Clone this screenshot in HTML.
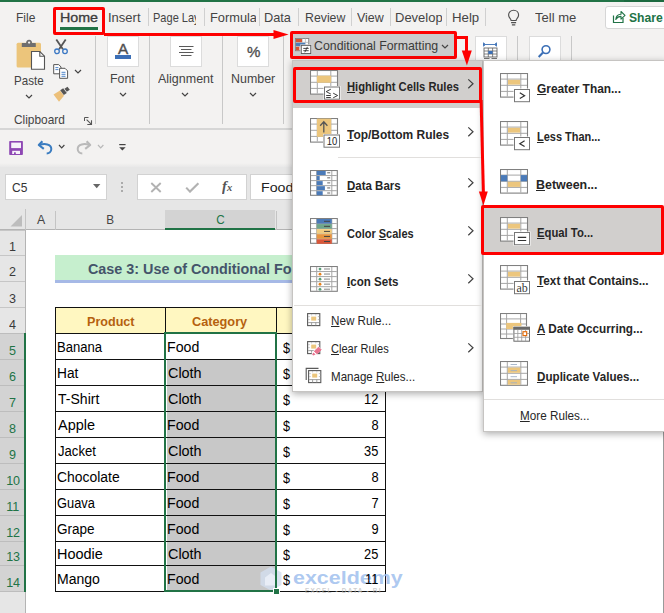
<!DOCTYPE html>
<html><head><meta charset="utf-8"><title>Excel</title>
<style>
html,body{margin:0;padding:0;}
body{width:664px;height:613px;overflow:hidden;background:#fff;position:relative;font-family:"Liberation Sans",sans-serif;}
#r{position:absolute;left:0;top:0;width:664px;height:613px;overflow:hidden;}
#r div,#r span,#r svg{position:absolute;box-sizing:border-box;}
#r .t{white-space:nowrap;line-height:1;}
#r u{text-decoration:underline;text-underline-offset:0.6px;text-decoration-thickness:1px;position:static;}
</style></head><body><div id="r">
<div style="left:0px;top:0px;width:664px;height:130px;background:#f3f2f1;"></div>
<div style="left:0px;top:0px;width:664px;height:2px;background:#217346;"></div>
<div style="left:624px;top:0px;width:40px;height:2px;background:#1c6a40;"></div>
<div style="left:0px;top:128px;width:664px;height:2px;background:#d6d6d6;"></div>
<div style="left:0px;top:130px;width:664px;height:35px;background:#f3f2f1;"></div>
<div style="left:0px;top:163px;width:664px;height:5px;background:linear-gradient(#f3f2f1,#e6e6e6);"></div>
<div style="left:0px;top:167px;width:664px;height:63px;background:#e6e6e6;"></div>
<div style="left:26px;top:230px;width:638px;height:383px;background:#fff;"></div>
<div style="left:0px;top:230px;width:26px;height:383px;background:#e6e6e6;"></div>
<span class="t" style="left:16.33px;top:12.00px;font-size:12.9px;color:#444444;transform:scaleX(0.9365);transform-origin:left top;">File</span>
<span class="t" style="left:59.56px;top:12.00px;font-size:12.9px;color:#3c3c3c;transform:scaleX(1.1057);transform-origin:left top;-webkit-text-stroke:0.32px #3c3c3c;">Home</span>
<div style="left:60px;top:27px;width:38px;height:3px;background:#217346;"></div>
<span class="t" style="left:108.33px;top:12.00px;font-size:12.9px;color:#444444;transform:scaleX(1.0100);transform-origin:left top;">Insert</span>
<div style="left:150px;top:5px;width:46px;height:25px;overflow:hidden"><span class="t" style="left:3.30px;top:7.00px;font-size:12.9px;color:#444444;transform:scaleX(0.8558);transform-origin:left top;">Page Layout</span></div>
<div style="left:206px;top:5px;width:49.8px;height:25px;overflow:hidden"><span class="t" style="left:3.50px;top:7.00px;font-size:12.9px;color:#444444;transform:scaleX(0.9938);transform-origin:left top;">Formulas</span></div>
<span class="t" style="left:264.28px;top:12.00px;font-size:12.9px;color:#444444;transform:scaleX(0.9904);transform-origin:left top;">Data</span>
<span class="t" style="left:304.62px;top:12.00px;font-size:12.9px;color:#444444;transform:scaleX(0.9545);transform-origin:left top;">Review</span>
<span class="t" style="left:357.20px;top:12.00px;font-size:12.9px;color:#444444;transform:scaleX(0.9663);transform-origin:left top;">View</span>
<div style="left:392px;top:5px;width:50.3px;height:25px;overflow:hidden"><span class="t" style="left:3.40px;top:7.00px;font-size:12.9px;color:#444444;transform:scaleX(1.0073);transform-origin:left top;">Developer</span></div>
<span class="t" style="left:451.64px;top:12.00px;font-size:12.9px;color:#444444;transform:scaleX(1.0256);transform-origin:left top;">Help</span>
<span class="t" style="left:535.44px;top:12.00px;font-size:12.9px;color:#444444;transform:scaleX(1.0111);transform-origin:left top;">Tell me</span>
<div style="left:148px;top:8px;width:1px;height:18px;background:#d0d0d0;"></div>
<div style="left:204px;top:8px;width:1px;height:18px;background:#d0d0d0;"></div>
<div style="left:259px;top:8px;width:1px;height:18px;background:#d0d0d0;"></div>
<div style="left:298px;top:8px;width:1px;height:18px;background:#d0d0d0;"></div>
<div style="left:351px;top:8px;width:1px;height:18px;background:#d0d0d0;"></div>
<div style="left:390px;top:8px;width:1px;height:18px;background:#d0d0d0;"></div>
<div style="left:446px;top:8px;width:1px;height:18px;background:#d0d0d0;"></div>
<div style="left:485px;top:8px;width:1px;height:18px;background:#d0d0d0;"></div>
<div style="left:605px;top:6px;width:70px;height:23px;background:#fff;border:1px solid #d6d6d6;border-radius:3px;"></div>
<span class="t" style="left:628.90px;top:11.00px;font-size:13.3px;color:#217346;font-weight:bold;transform:scaleX(0.9133);transform-origin:left top;">Share</span>
<svg style="left:612px;top:9px;" width="14" height="15" viewBox="0 0 14 15"><path d="M1.5 6.5v7h9.5v-4.5" fill="none" stroke="#217346" stroke-width="1.2"/><path d="M3.8 10.5c0.3-3.6 2.4-5.2 5.2-5.3v-2.7l4 3.8-4 3.8v-2.7c-2.2 0-3.8 0.7-5.2 3.1z" fill="none" stroke="#217346" stroke-width="1.1" stroke-linejoin="round"/></svg>
<svg style="left:506px;top:8px;" width="16" height="20" viewBox="0 0 16 20"><path d="M7.6 2.2c-3 0-5 2.2-5 4.8 0 1.7 0.8 2.7 1.6 3.6 0.6 0.7 0.9 1.2 0.9 1.9h5c0-0.7 0.3-1.2 0.9-1.9 0.8-0.9 1.6-1.9 1.6-3.6 0-2.6-2-4.8-5-4.8z" fill="none" stroke="#505050" stroke-width="1.15"/><path d="M5.1 14.6h5M5.9 16.9h3.4" stroke="#505050" stroke-width="1.1"/></svg>
<svg style="left:14px;top:38px;" width="34" height="34" viewBox="0 0 34 34">
<rect x="2.6" y="4.8" width="24.4" height="24.8" rx="1.5" fill="#ecc57b"/>
<path d="M7.8 8.9V5.4q0-0.5 0.5-0.5h3.8c0-1.6 0.9-3.1 3-3.1s3 1.5 3 3.1h3.2q0.5 0 0.5 0.5V8.9z" fill="#6e6e6e"/>
<circle cx="15.1" cy="4.6" r="1.15" fill="#f3f3f3"/>
<path d="M17.5 13.5h8.3l4.7 4.7v13H17.5z" fill="#fff" stroke="#555" stroke-width="1.1"/>
<path d="M25.8 13.5v4.7h4.7" fill="none" stroke="#555" stroke-width="1.1"/>
</svg>
<span class="t" style="left:14.27px;top:75.00px;font-size:12.4px;color:#444444;transform:scaleX(0.9340);transform-origin:left top;">Paste</span>
<svg style="left:24.6px;top:94.0px;" width="8" height="5" viewBox="0 0 8 5"><path d="M1 1l3.0 3 3.0-3" fill="none" stroke="#444" stroke-width="1.2"/></svg>
<svg style="left:52px;top:38px;" width="18" height="18" viewBox="0 0 18 18">
<path d="M4.3 1.5l6.6 9.7M13.7 1.5l-6.6 9.7" stroke="#555" stroke-width="1.8" fill="none"/>
<circle cx="5" cy="13.3" r="2.3" fill="none" stroke="#3b78c4" stroke-width="1.3"/>
<circle cx="13" cy="13.3" r="2.3" fill="none" stroke="#3b78c4" stroke-width="1.3"/>
</svg>
<svg style="left:52px;top:63px;" width="18" height="17" viewBox="0 0 18 17">
<path d="M1.7 1.6h5l2.3 2.3v6.9H1.7z" fill="#fff" stroke="#555" stroke-width="1"/>
<path d="M3.4 4.6h3M3.4 6.6h3" stroke="#3b78c4" stroke-width="0.9"/>
<path d="M7.6 5.3h5.4l2.6 2.6v7.4H7.6z" fill="#fff" stroke="#555" stroke-width="1"/>
<path d="M9.5 9.3h4M9.5 11.3h4M9.5 13.3h4" stroke="#3b78c4" stroke-width="0.9"/>
</svg>
<svg style="left:74.4px;top:68.9px;" width="8" height="5" viewBox="0 0 8 5"><path d="M1 1l3.0 3 3.0-3" fill="none" stroke="#444" stroke-width="1.2"/></svg>
<svg style="left:52px;top:86px;" width="19" height="17" viewBox="0 0 19 17">
<path d="M1.5 8.5l6.5-4 4 5.2-5 6z" fill="#ecc07a"/>
<path d="M8.2 4.2l3-1.9 3.6 4.7-3 1.9z" fill="#555"/>
<path d="M12.5 2.8l3-2 2.3 3-3 2z" fill="#555"/>
</svg>
<span class="t" style="left:14.01px;top:114.00px;font-size:12.4px;color:#444444;transform:scaleX(0.9592);transform-origin:left top;">Clipboard</span>
<svg style="left:83px;top:116px;" width="10" height="10" viewBox="0 0 10 10"><path d="M1.5 5V1.5H5.5" fill="none" stroke="#555" stroke-width="1"/><path d="M3.6 3.6l4.6 4.6M8.5 4.3v4.2H4.3" fill="none" stroke="#555" stroke-width="1.1"/></svg>
<div style="left:95px;top:36px;width:1px;height:88px;background:#c8c8c8;"></div>
<div style="left:107px;top:36px;width:32px;height:31px;background:#fff;border:1px solid #dcdcdc;"></div>
<span class="t" style="left:118.20px;top:42.00px;font-size:14.6px;color:#505050;transform:scaleX(1.0506);transform-origin:left top;-webkit-text-stroke:0.4px #505050;">A</span>
<div style="left:115px;top:55.3px;width:16px;height:3.5px;background:#3c6fb6;"></div>
<span class="t" style="left:110.21px;top:73.00px;font-size:12.4px;color:#444444;transform:scaleX(0.9997);transform-origin:left top;">Font</span>
<svg style="left:118.6px;top:92.0px;" width="8" height="5" viewBox="0 0 8 5"><path d="M1 1l3.0 3 3.0-3" fill="none" stroke="#444" stroke-width="1.2"/></svg>
<div style="left:149px;top:36px;width:1px;height:88px;background:#c8c8c8;"></div>
<div style="left:170px;top:36px;width:32px;height:31px;background:#fff;border:1px solid #dcdcdc;"></div>
<svg style="left:178px;top:45px;" width="17" height="12" viewBox="0 0 17 12"><path d="M1 1.5h14.5M3 4.5h10.5M1 7.5h14.5M3 10.5h10.5" stroke="#5a5a5a" stroke-width="1"/></svg>
<span class="t" style="left:158.40px;top:73.00px;font-size:12.4px;color:#444444;transform:scaleX(1.0069);transform-origin:left top;">Alignment</span>
<svg style="left:181.4px;top:91.8px;" width="8" height="5" viewBox="0 0 8 5"><path d="M1 1l3.0 3 3.0-3" fill="none" stroke="#444" stroke-width="1.2"/></svg>
<div style="left:222px;top:36px;width:1px;height:88px;background:#c8c8c8;"></div>
<div style="left:237px;top:36px;width:32px;height:31px;background:#fff;border:1px solid #dcdcdc;"></div>
<span class="t" style="left:246.87px;top:45.00px;font-size:14.8px;color:#505050;transform:scaleX(1.0218);transform-origin:left top;-webkit-text-stroke:0.35px #505050;">%</span>
<span class="t" style="left:230.70px;top:73.00px;font-size:12.4px;color:#444444;transform:scaleX(1.0031);transform-origin:left top;">Number</span>
<svg style="left:248.5px;top:91.8px;" width="8" height="5" viewBox="0 0 8 5"><path d="M1 1l3.0 3 3.0-3" fill="none" stroke="#444" stroke-width="1.2"/></svg>
<div style="left:283px;top:36px;width:1px;height:88px;background:#c8c8c8;"></div>
<div style="left:475px;top:36px;width:32px;height:31px;background:#fff;border:1px solid #dcdcdc;"></div>
<svg style="left:482px;top:42px;" width="17" height="17" viewBox="0 0 17 17">
<path d="M1.5 2.5h13M1.5 0.5v4M14.5 0.5v4M3 1.2l-1.5 1.3L3 3.8M13 1.2l1.5 1.3L13 3.8" fill="none" stroke="#3b6fb6" stroke-width="0.9"/>
<rect x="2" y="6" width="13" height="9" fill="#fff" stroke="#666" stroke-width="0.9"/>
<path d="M2 9h13M2 12h13M6.3 6v9M10.6 6v9" stroke="#666" stroke-width="0.8"/>
<rect x="6.3" y="9" width="4.3" height="3" fill="#3b6fb6"/>
<path d="M2 16.5h5.5M9.5 16.5H15" stroke="#666" stroke-width="0.9"/>
</svg>
<div style="left:517px;top:36px;width:1px;height:26px;background:#c8c8c8;"></div>
<div style="left:529px;top:36px;width:32px;height:31px;background:#fff;border:1px solid #dcdcdc;"></div>
<svg style="left:537px;top:44px;" width="15" height="15" viewBox="0 0 15 15"><circle cx="9" cy="5.6" r="3.9" fill="none" stroke="#3b6fb6" stroke-width="1.6"/><path d="M6 8.6l-4.3 4.3" stroke="#3b6fb6" stroke-width="2.1"/></svg>
<div style="left:571px;top:36px;width:1px;height:26px;background:#c8c8c8;"></div>
<div style="left:290px;top:31px;width:167px;height:27.5px;background:#cbcbcb;border:3px solid #fe0000;border-radius:2px;"></div>
<svg style="left:295px;top:38px;" width="18" height="17" viewBox="0 0 18 17">
<rect x="0.5" y="0.5" width="13.2" height="12.2" fill="#fff" stroke="#808080" stroke-width="0.9"/>
<path d="M7.2 0.5v3.8M10.4 0.5v3.8M0.5 4.4h13M0.5 8.4h13" stroke="#b0b0b0" stroke-width="0.7"/>
<rect x="1" y="1" width="6" height="3.2" fill="#d65532"/>
<rect x="1" y="4.8" width="9.4" height="3.3" fill="#4a7ebb"/>
<rect x="1" y="8.8" width="3.4" height="3.5" fill="#d65532"/>
<rect x="5.3" y="6.4" width="11.2" height="9.9" fill="#fff"/>
<rect x="6.2" y="7.3" width="9.6" height="8.3" fill="#fff" stroke="#555" stroke-width="1"/>
<path d="M8.3 10.4h5.4M8.3 12.7h5.4M12.4 8.9l-2.6 5.4" stroke="#333" stroke-width="0.9"/>
</svg>
<span class="t" style="left:314.08px;top:40.00px;font-size:12.6px;color:#3a3a3a;transform:scaleX(0.9803);transform-origin:left top;">Conditional Formatting</span>
<svg style="left:440.7px;top:44.0px;" width="8" height="5" viewBox="0 0 8 5"><path d="M1 1l3.0 3 3.0-3" fill="none" stroke="#444" stroke-width="1.2"/></svg>
<svg style="left:8px;top:139px;" width="16" height="17" viewBox="0 0 16 17">
<rect x="1.2" y="2" width="13.7" height="14" rx="0.8" fill="#8e48b4"/>
<rect x="3.2" y="3.6" width="9.8" height="5.5" fill="#f7f3fa"/>
<rect x="4.2" y="11.8" width="7.8" height="3.2" fill="#f7f3fa"/>
<rect x="6" y="13.3" width="1.8" height="1.7" fill="#8e48b4"/>
</svg>
<svg style="left:36px;top:139px;" width="18" height="16" viewBox="0 0 18 16"><path d="M6.4 2.2L2.8 6l5 3.9" fill="none" stroke="#3a7cc0" stroke-width="2.1" stroke-linejoin="round"/><path d="M3.6 6.1C8.5 4.2 15.3 5 15.3 10c0 2.8-2.2 4.4-4.6 4.5" fill="none" stroke="#3a7cc0" stroke-width="2"/></svg>
<svg style="left:57.8px;top:144.1px;" width="7.4" height="4.8" viewBox="0 0 7.4 4.8"><path d="M1 1l2.7 2.8 2.7-2.8" fill="none" stroke="#444" stroke-width="1.2"/></svg>
<svg style="left:75px;top:139px;" width="18" height="16" viewBox="0 0 18 16"><path d="M11.6 2.2L15.2 6l-5 3.9" fill="none" stroke="#b9b9b9" stroke-width="2.1" stroke-linejoin="round"/><path d="M14.4 6.1C9.5 4.2 2.7 5 2.7 10c0 2.8 2.2 4.4 4.6 4.5" fill="none" stroke="#b9b9b9" stroke-width="2"/></svg>
<svg style="left:96.7px;top:144.1px;" width="7.4" height="4.8" viewBox="0 0 7.4 4.8"><path d="M1 1l2.7 2.8 2.7-2.8" fill="none" stroke="#b8b8b8" stroke-width="1.2"/></svg>
<svg style="left:118px;top:143px;" width="9" height="9" viewBox="0 0 9 9"><path d="M1.2 1.6h6.4" stroke="#444" stroke-width="1.2"/><path d="M1.2 4.2h6.4l-3.2 3.4z" fill="#444"/></svg>
<div style="left:5px;top:174px;width:102px;height:26px;background:#fff;border:1px solid #d2d2d2;"></div>
<span class="t" style="left:11.80px;top:181.00px;font-size:13px;color:#333;transform:scaleX(0.9218);transform-origin:left top;">C5</span>
<svg style="left:93px;top:184px;" width="8" height="5" viewBox="0 0 8 5"><path d="M0 0h7.4l-3.7 4.2z" fill="#666"/></svg>
<div style="left:121px;top:182px;width:2px;height:2px;background:#ababab;"></div>
<div style="left:121px;top:186px;width:2px;height:2px;background:#ababab;"></div>
<div style="left:121px;top:190px;width:2px;height:2px;background:#ababab;"></div>
<div style="left:137px;top:174px;width:110px;height:26px;background:#fff;border:1px solid #d2d2d2;"></div>
<svg style="left:150px;top:182px;" width="12" height="11" viewBox="0 0 12 11"><path d="M1.3 1l9.4 9M10.7 1l-9.4 9" stroke="#b2b2b2" stroke-width="1.9"/></svg>
<svg style="left:185px;top:182px;" width="15" height="11" viewBox="0 0 15 11"><path d="M1.2 5.6l3.8 4L13.4 1.2" fill="none" stroke="#b2b2b2" stroke-width="2.1"/></svg>
<span class="t" style="left:222.4px;top:178px;font-size:15.5px;font-family:'Liberation Serif',serif;font-style:italic;font-weight:bold;color:#555;transform:scaleX(0.95);transform-origin:left top;">f<span style="position:static;font-size:11px">x</span></span>
<div style="left:250px;top:174px;width:420px;height:26px;background:#fff;border:1px solid #d2d2d2;"></div>
<span class="t" style="left:261.46px;top:181.00px;font-size:13.3px;color:#222;transform:scaleX(1.0681);transform-origin:left top;">Food</span>
<div style="left:0px;top:229px;width:664px;height:1px;background:#b4b4b4;"></div>
<svg style="left:9px;top:214px;" width="14" height="13" viewBox="0 0 14 13"><path d="M13 1v11.5H1.5z" fill="#bdbdbd"/></svg>
<div style="left:25px;top:209px;width:1px;height:21px;background:#c4c4c4;"></div>
<div style="left:55px;top:211px;width:1px;height:19px;background:#c4c4c4;"></div>
<div style="left:165px;top:210px;width:110px;height:20px;background:#d3d3d3;"></div>
<div style="left:165px;top:227.5px;width:110px;height:2.5px;background:#217346;"></div>
<div style="left:276px;top:211px;width:1px;height:19px;background:#c4c4c4;"></div>
<span class="t" style="left:37.10px;top:214.00px;font-size:12.3px;color:#444;transform:scaleX(1.0000);transform-origin:center top;">A</span>
<span class="t" style="left:106.30px;top:214.00px;font-size:12.3px;color:#444;transform:scaleX(0.9500);transform-origin:center top;">B</span>
<span class="t" style="left:216.06px;top:214.00px;font-size:12.3px;color:#217346;transform:scaleX(0.9500);transform-origin:center top;">C</span>
<div style="left:0px;top:333px;width:26px;height:258px;background:#d3d3d3;"></div>
<div style="left:0px;top:229.5px;width:25px;height:1px;background:#c6c6c6;"></div>
<div style="left:0px;top:254.5px;width:25px;height:1px;background:#c6c6c6;"></div>
<div style="left:0px;top:281.0px;width:25px;height:1px;background:#c6c6c6;"></div>
<div style="left:0px;top:306.5px;width:25px;height:1px;background:#c6c6c6;"></div>
<div style="left:0px;top:332.5px;width:25px;height:1px;background:#bdbdbd;"></div>
<div style="left:0px;top:358.5px;width:25px;height:1px;background:#bdbdbd;"></div>
<div style="left:0px;top:384.5px;width:25px;height:1px;background:#bdbdbd;"></div>
<div style="left:0px;top:410.5px;width:25px;height:1px;background:#bdbdbd;"></div>
<div style="left:0px;top:436.5px;width:25px;height:1px;background:#bdbdbd;"></div>
<div style="left:0px;top:462.5px;width:25px;height:1px;background:#bdbdbd;"></div>
<div style="left:0px;top:488.5px;width:25px;height:1px;background:#bdbdbd;"></div>
<div style="left:0px;top:514.5px;width:25px;height:1px;background:#bdbdbd;"></div>
<div style="left:0px;top:540.5px;width:25px;height:1px;background:#bdbdbd;"></div>
<div style="left:0px;top:564.5px;width:25px;height:1px;background:#bdbdbd;"></div>
<div style="left:0px;top:590.5px;width:25px;height:1px;background:#bdbdbd;"></div>
<div style="left:25px;top:230px;width:1px;height:383px;background:#b4b4b4;"></div>
<div style="left:24px;top:333px;width:2px;height:259px;background:#217346;"></div>
<span class="t" style="left:9.34px;top:241.00px;font-size:12.8px;color:#3a3a3a;transform:scaleX(0.9800);transform-origin:center top;">1</span>
<span class="t" style="left:9.34px;top:266.00px;font-size:12.8px;color:#3a3a3a;transform:scaleX(0.9800);transform-origin:center top;">2</span>
<span class="t" style="left:9.34px;top:293.00px;font-size:12.8px;color:#3a3a3a;transform:scaleX(0.9800);transform-origin:center top;">3</span>
<span class="t" style="left:9.34px;top:319.00px;font-size:12.8px;color:#3a3a3a;transform:scaleX(0.9800);transform-origin:center top;">4</span>
<span class="t" style="left:9.34px;top:345.00px;font-size:12.8px;color:#217346;transform:scaleX(0.9800);transform-origin:center top;">5</span>
<span class="t" style="left:9.34px;top:371.00px;font-size:12.8px;color:#217346;transform:scaleX(0.9800);transform-origin:center top;">6</span>
<span class="t" style="left:9.34px;top:397.00px;font-size:12.8px;color:#217346;transform:scaleX(0.9800);transform-origin:center top;">7</span>
<span class="t" style="left:9.34px;top:423.00px;font-size:12.8px;color:#217346;transform:scaleX(0.9800);transform-origin:center top;">8</span>
<span class="t" style="left:9.34px;top:449.00px;font-size:12.8px;color:#217346;transform:scaleX(0.9800);transform-origin:center top;">9</span>
<span class="t" style="left:5.78px;top:475.00px;font-size:12.8px;color:#217346;transform:scaleX(0.9800);transform-origin:center top;">10</span>
<span class="t" style="left:6.26px;top:501.00px;font-size:12.8px;color:#217346;transform:scaleX(0.9800);transform-origin:center top;">11</span>
<span class="t" style="left:5.78px;top:527.00px;font-size:12.8px;color:#217346;transform:scaleX(0.9800);transform-origin:center top;">12</span>
<span class="t" style="left:5.78px;top:551.00px;font-size:12.8px;color:#217346;transform:scaleX(0.9800);transform-origin:center top;">13</span>
<span class="t" style="left:5.78px;top:577.00px;font-size:12.8px;color:#217346;transform:scaleX(0.9800);transform-origin:center top;">14</span>
<div style="left:55px;top:255px;width:330px;height:25.2px;background:#c6efce;"></div>
<div style="left:55px;top:280.2px;width:330px;height:2.6px;background:#a6b9e6;"></div>
<span class="t" style="left:88.18px;top:262.00px;font-size:14.3px;color:#44546a;font-weight:bold;transform:scaleX(1.0048);transform-origin:left top;">Case 3: Use of Conditional Fo</span>
<div style="left:55px;top:307px;width:331px;height:26px;background:#fff7c1;"></div>
<div style="left:167px;top:360px;width:108px;height:231px;background:#c8c8c8;"></div>
<div style="left:55px;top:306.5px;width:331px;height:1.2px;background:#111;"></div>
<div style="left:55px;top:332.5px;width:331px;height:1.2px;background:#111;"></div>
<div style="left:55px;top:358.5px;width:331px;height:1.2px;background:#111;"></div>
<div style="left:55px;top:384.5px;width:331px;height:1.2px;background:#111;"></div>
<div style="left:55px;top:410.5px;width:331px;height:1.2px;background:#111;"></div>
<div style="left:55px;top:436.5px;width:331px;height:1.2px;background:#111;"></div>
<div style="left:55px;top:462.5px;width:331px;height:1.2px;background:#111;"></div>
<div style="left:55px;top:488.5px;width:331px;height:1.2px;background:#111;"></div>
<div style="left:55px;top:514.5px;width:331px;height:1.2px;background:#111;"></div>
<div style="left:55px;top:540.5px;width:331px;height:1.2px;background:#111;"></div>
<div style="left:55px;top:564.5px;width:331px;height:1.2px;background:#111;"></div>
<div style="left:55px;top:590.5px;width:331px;height:1.2px;background:#111;"></div>
<div style="left:54.7px;top:307px;width:1.2px;height:284.5px;background:#111;"></div>
<div style="left:164.7px;top:307px;width:1.2px;height:284.5px;background:#111;"></div>
<div style="left:275.7px;top:307px;width:1.2px;height:284.5px;background:#111;"></div>
<div style="left:384.7px;top:307px;width:1.2px;height:284.5px;background:#111;"></div>
<svg style="left:259px;top:565px;" width="25" height="27" viewBox="0 0 25 27"><path d="M12 1.5l10.5 6v12.5L12 25.5 1.5 20V7.5z" fill="#d3deef" opacity="0.8"/><path d="M12 8l6 4.5v8H6v-8z" fill="#e9eef7" opacity="0.95"/></svg>
<span class="t" style="left:293.25px;top:569.00px;font-size:18.6px;color:rgba(160,192,238,0.85);font-weight:bold;transform:scaleX(1.1536);transform-origin:left top;">exceldemy</span>
<span class="t" style="left:305.00px;top:588.00px;font-size:6.4px;color:rgba(185,185,185,0.7);font-weight:bold;transform:scaleX(1.0000);transform-origin:left top;letter-spacing:1.25px;">EXCEL - DATA - BI</span>
<span class="t" style="left:86.88px;top:315.00px;font-size:13.6px;color:#b5610f;font-weight:bold;transform:scaleX(0.9248);transform-origin:left top;">Product</span>
<span class="t" style="left:192.49px;top:315.00px;font-size:13.6px;color:#b5610f;font-weight:bold;transform:scaleX(0.9365);transform-origin:left top;">Category</span>
<span class="t" style="left:57.35px;top:341.00px;font-size:13.8px;color:#000;transform:scaleX(0.9483);transform-origin:left top;">Banana</span>
<span class="t" style="left:167.17px;top:341.00px;font-size:13.8px;color:#000;transform:scaleX(1.0260);transform-origin:left top;">Food</span>
<span class="t" style="left:282.87px;top:341.00px;font-size:14.6px;color:#000;transform:scaleX(0.8706);transform-origin:left top;">$</span>
<span class="t" style="left:57.30px;top:367.00px;font-size:13.8px;color:#000;transform:scaleX(0.9924);transform-origin:left top;">Hat</span>
<span class="t" style="left:167.58px;top:367.00px;font-size:13.8px;color:#000;transform:scaleX(1.0422);transform-origin:left top;">Cloth</span>
<span class="t" style="left:282.87px;top:367.00px;font-size:14.6px;color:#000;transform:scaleX(0.8706);transform-origin:left top;">$</span>
<span class="t" style="left:57.62px;top:393.00px;font-size:13.8px;color:#000;transform:scaleX(1.0175);transform-origin:left top;">T-Shirt</span>
<span class="t" style="left:167.58px;top:393.00px;font-size:13.8px;color:#000;transform:scaleX(1.0422);transform-origin:left top;">Cloth</span>
<span class="t" style="left:282.87px;top:393.00px;font-size:14.6px;color:#000;transform:scaleX(0.8706);transform-origin:left top;">$</span>
<span class="t" style="right:285.80px;top:393.00px;font-size:13.8px;color:#000;transform:scaleX(0.9300);transform-origin:right top;">12</span>
<span class="t" style="left:57.90px;top:419.00px;font-size:13.8px;color:#000;transform:scaleX(1.0488);transform-origin:left top;">Apple</span>
<span class="t" style="left:167.17px;top:419.00px;font-size:13.8px;color:#000;transform:scaleX(1.0260);transform-origin:left top;">Food</span>
<span class="t" style="left:282.87px;top:419.00px;font-size:14.6px;color:#000;transform:scaleX(0.8706);transform-origin:left top;">$</span>
<span class="t" style="right:285.80px;top:419.00px;font-size:13.8px;color:#000;transform:scaleX(0.9300);transform-origin:right top;">8</span>
<span class="t" style="left:57.70px;top:445.00px;font-size:13.8px;color:#000;transform:scaleX(0.9494);transform-origin:left top;">Jacket</span>
<span class="t" style="left:167.58px;top:445.00px;font-size:13.8px;color:#000;transform:scaleX(1.0422);transform-origin:left top;">Cloth</span>
<span class="t" style="left:282.87px;top:445.00px;font-size:14.6px;color:#000;transform:scaleX(0.8706);transform-origin:left top;">$</span>
<span class="t" style="right:285.80px;top:445.00px;font-size:13.8px;color:#000;transform:scaleX(0.9300);transform-origin:right top;">35</span>
<span class="t" style="left:57.20px;top:471.00px;font-size:13.8px;color:#000;transform:scaleX(1.0089);transform-origin:left top;">Chocolate</span>
<span class="t" style="left:167.17px;top:471.00px;font-size:13.8px;color:#000;transform:scaleX(1.0260);transform-origin:left top;">Food</span>
<span class="t" style="left:282.87px;top:471.00px;font-size:14.6px;color:#000;transform:scaleX(0.8706);transform-origin:left top;">$</span>
<span class="t" style="right:285.80px;top:471.00px;font-size:13.8px;color:#000;transform:scaleX(0.9300);transform-origin:right top;">8</span>
<span class="t" style="left:57.26px;top:497.00px;font-size:13.8px;color:#000;transform:scaleX(0.9320);transform-origin:left top;">Guava</span>
<span class="t" style="left:167.17px;top:497.00px;font-size:13.8px;color:#000;transform:scaleX(1.0260);transform-origin:left top;">Food</span>
<span class="t" style="left:282.87px;top:497.00px;font-size:14.6px;color:#000;transform:scaleX(0.8706);transform-origin:left top;">$</span>
<span class="t" style="right:285.80px;top:497.00px;font-size:13.8px;color:#000;transform:scaleX(0.9300);transform-origin:right top;">7</span>
<span class="t" style="left:57.22px;top:523.00px;font-size:13.8px;color:#000;transform:scaleX(0.9806);transform-origin:left top;">Grape</span>
<span class="t" style="left:167.17px;top:523.00px;font-size:13.8px;color:#000;transform:scaleX(1.0260);transform-origin:left top;">Food</span>
<span class="t" style="left:282.87px;top:523.00px;font-size:14.6px;color:#000;transform:scaleX(0.8706);transform-origin:left top;">$</span>
<span class="t" style="right:285.80px;top:523.00px;font-size:13.8px;color:#000;transform:scaleX(0.9300);transform-origin:right top;">9</span>
<span class="t" style="left:57.24px;top:548.00px;font-size:13.8px;color:#000;transform:scaleX(1.0478);transform-origin:left top;">Hoodie</span>
<span class="t" style="left:167.58px;top:548.00px;font-size:13.8px;color:#000;transform:scaleX(1.0422);transform-origin:left top;">Cloth</span>
<span class="t" style="left:282.87px;top:548.00px;font-size:14.6px;color:#000;transform:scaleX(0.8706);transform-origin:left top;">$</span>
<span class="t" style="right:285.80px;top:548.00px;font-size:13.8px;color:#000;transform:scaleX(0.9300);transform-origin:right top;">25</span>
<span class="t" style="left:57.28px;top:573.00px;font-size:13.8px;color:#000;transform:scaleX(1.0172);transform-origin:left top;">Mango</span>
<span class="t" style="left:167.17px;top:573.00px;font-size:13.8px;color:#000;transform:scaleX(1.0260);transform-origin:left top;">Food</span>
<span class="t" style="left:282.87px;top:573.00px;font-size:14.6px;color:#000;transform:scaleX(0.8706);transform-origin:left top;">$</span>
<span class="t" style="right:285.80px;top:573.00px;font-size:13.8px;color:#000;transform:scaleX(0.9300);transform-origin:right top;">11</span>
<div style="left:164px;top:332px;width:113px;height:260px;background:transparent;border:2px solid #217346;"></div>
<div style="left:272.6px;top:588px;width:7px;height:7px;background:#217346;border:1px solid #fff;"></div>
<div style="left:663px;top:431px;width:1px;height:182px;background:#9a9a9a;"></div>
<div style="left:292px;top:59.5px;width:190.5px;height:332px;background:#fff;border:1px solid #c6c4c2;box-shadow:0 2px 7px rgba(0,0,0,0.32);"></div>
<div style="left:482.5px;top:59.5px;width:184px;height:372px;background:#fff;border:1px solid #c6c4c2;box-shadow:0 2px 7px rgba(0,0,0,0.32);"></div>
<div style="left:293px;top:60.5px;width:189px;height:47px;background:#d1cfcd;"></div>
<svg style="left:310px;top:70px;" width="32" height="31" viewBox="0 0 32 31"><rect x="0.5" y="0.5" width="27" height="23.6" fill="#fff" stroke="#808080" stroke-width="1.1"/><path d="M7.3 1V23.6M20.8 1V23.6M1 6.1H27M1 12.3H27M1 18.4H27" stroke="#a6a6a6" stroke-width="1" fill="none"/><rect x="6.8999999999999995" y="5.699999999999999" width="14.3" height="7.0" fill="#ecc67d"/><rect x="13.5" y="16" width="17" height="14.2" fill="#fff"/><rect x="14.5" y="17" width="15" height="12.2" fill="#fff" stroke="#777" stroke-width="1"/><path d="M20.8 19.2L16.2 21.6 20.8 24M16.2 25.5h4.6M16.2 27.5h4.6M23.2 23.2l4.4 2.3-4.4 2.3" fill="none" stroke="#333" stroke-width="0.95"/></svg>
<span class="t" style="left:347.17px;top:81.00px;font-size:12.6px;color:#262626;font-weight:bold;transform:scaleX(0.8882);transform-origin:left top;"><u>H</u>ighlight Cells Rules</span>
<svg style="left:467.4px;top:77.7px;" width="8" height="12" viewBox="0 0 8 12"><path d="M1.3 1.4l4.7 4.4-4.7 4.4" fill="none" stroke="#404040" stroke-width="1.2"/></svg>
<svg style="left:310px;top:118px;" width="32" height="31" viewBox="0 0 32 31"><rect x="0.5" y="0.5" width="27" height="23.6" fill="#fff" stroke="#808080" stroke-width="1.1"/><path d="M7.3 1V23.6M20.8 1V23.6M1 6.1H27M1 12.3H27M1 18.4H27" stroke="#a6a6a6" stroke-width="1" fill="none"/><rect x="6.8999999999999995" y="0.6" width="14.3" height="18.2" fill="#ecc67d"/><path d="M13.8 14.5V4M10.2 7.8L13.8 3.8l3.6 4" fill="none" stroke="#555" stroke-width="1.3"/><rect x="13" y="16" width="17.5" height="14.2" fill="#fff"/><rect x="14" y="17" width="15.5" height="12.2" fill="#fff" stroke="#777" stroke-width="1"/><text x="22" y="27.2" font-size="10.2" text-anchor="middle" font-family="Liberation Sans" fill="#222" textLength="10.5" lengthAdjust="spacingAndGlyphs">10</text></svg>
<span class="t" style="left:347.28px;top:129.00px;font-size:12.6px;color:#262626;font-weight:bold;transform:scaleX(0.9498);transform-origin:left top;"><u>T</u>op/Bottom Rules</span>
<svg style="left:467.4px;top:125.5px;" width="8" height="12" viewBox="0 0 8 12"><path d="M1.3 1.4l4.7 4.4-4.7 4.4" fill="none" stroke="#404040" stroke-width="1.2"/></svg>
<div style="left:338px;top:157px;width:144px;height:1px;background:#e1dfdd;"></div>
<svg style="left:310px;top:170px;" width="29" height="27" viewBox="0 0 29 27"><rect x="0.5" y="0.5" width="26.8" height="24.8" fill="#fff" stroke="#808080" stroke-width="1.1"/><path d="M6.7 1V24.8M21.8 1V24.8M1 5.55H26.8M1 10.6H26.8M1 15.65H26.8M1 20.7H26.8" stroke="#a6a6a6" stroke-width="1" fill="none"/><rect x="6.7" y="1.00" width="9" height="4" fill="#4a7ab8"/><path d="M17.2 2.80h3" stroke="#555" stroke-width="0.9"/><rect x="6.7" y="6.05" width="3" height="4" fill="#4a7ab8"/><path d="M17.2 7.85h3" stroke="#555" stroke-width="0.9"/><rect x="6.7" y="11.10" width="6" height="4" fill="#4a7ab8"/><path d="M17.2 12.90h3" stroke="#555" stroke-width="0.9"/><rect x="6.7" y="16.15" width="8.2" height="4" fill="#4a7ab8"/><path d="M17.2 17.95h3" stroke="#555" stroke-width="0.9"/><rect x="6.7" y="21.20" width="6" height="4" fill="#4a7ab8"/><path d="M17.2 23.00h3" stroke="#555" stroke-width="0.9"/></svg>
<span class="t" style="left:346.65px;top:180.00px;font-size:12.6px;color:#262626;font-weight:bold;transform:scaleX(0.9117);transform-origin:left top;"><u>D</u>ata Bars</span>
<svg style="left:467.4px;top:176.5px;" width="8" height="12" viewBox="0 0 8 12"><path d="M1.3 1.4l4.7 4.4-4.7 4.4" fill="none" stroke="#404040" stroke-width="1.2"/></svg>
<svg style="left:310px;top:218px;" width="29" height="27" viewBox="0 0 29 27"><rect x="0.5" y="0.5" width="26.8" height="24.8" fill="#fff" stroke="#808080" stroke-width="1.1"/><path d="M6.7 1V24.8M21.8 1V24.8M1 5.55H26.8M1 10.6H26.8M1 15.65H26.8M1 20.7H26.8" stroke="#a6a6a6" stroke-width="1" fill="none"/><rect x="6.7" y="1.00" width="15.1" height="4.6" fill="#4a7ab8"/><path d="M14 3.30h6" stroke="#444" stroke-width="1"/><rect x="6.7" y="6.05" width="15.1" height="4.6" fill="#6fa58a"/><path d="M14 8.35h6" stroke="#444" stroke-width="1"/><rect x="6.7" y="11.10" width="15.1" height="4.6" fill="#f2cd80"/><path d="M14 13.40h6" stroke="#444" stroke-width="1"/><rect x="6.7" y="16.15" width="15.1" height="4.6" fill="#e8953f"/><path d="M14 18.45h6" stroke="#444" stroke-width="1"/><rect x="6.7" y="21.20" width="15.1" height="4.6" fill="#d9573a"/><path d="M14 23.50h6" stroke="#444" stroke-width="1"/></svg>
<span class="t" style="left:346.96px;top:228.00px;font-size:12.6px;color:#262626;font-weight:bold;transform:scaleX(0.8733);transform-origin:left top;">Color <u>S</u>cales</span>
<svg style="left:467.4px;top:224.5px;" width="8" height="12" viewBox="0 0 8 12"><path d="M1.3 1.4l4.7 4.4-4.7 4.4" fill="none" stroke="#404040" stroke-width="1.2"/></svg>
<svg style="left:310px;top:266px;" width="29" height="27" viewBox="0 0 29 27"><rect x="0.5" y="0.5" width="26.8" height="24.8" fill="#fff" stroke="#808080" stroke-width="1.1"/><path d="M6.7 1V24.8M21.8 1V24.8M1 5.55H26.8M1 10.6H26.8M1 15.65H26.8M1 20.7H26.8" stroke="#a6a6a6" stroke-width="1" fill="none"/><circle cx="10" cy="3.10" r="1.4" fill="#5a9e7a"/><path d="M14 3.00h6" stroke="#777" stroke-width="0.9"/><circle cx="10" cy="8.15" r="1.4" fill="#e8821e"/><path d="M14 8.05h6" stroke="#777" stroke-width="0.9"/><circle cx="10" cy="13.20" r="1.4" fill="#5a9e7a"/><path d="M14 13.10h6" stroke="#777" stroke-width="0.9"/><circle cx="10" cy="18.25" r="1.4" fill="#e8821e"/><path d="M14 18.15h6" stroke="#777" stroke-width="0.9"/><circle cx="10" cy="23.30" r="1.4" fill="#5a9e7a"/><path d="M14 23.20h6" stroke="#777" stroke-width="0.9"/></svg>
<span class="t" style="left:346.65px;top:276.00px;font-size:12.6px;color:#262626;font-weight:bold;transform:scaleX(0.9188);transform-origin:left top;"><u>I</u>con Sets</span>
<svg style="left:467.4px;top:272.5px;" width="8" height="12" viewBox="0 0 8 12"><path d="M1.3 1.4l4.7 4.4-4.7 4.4" fill="none" stroke="#404040" stroke-width="1.2"/></svg>
<div style="left:293.5px;top:305px;width:188.5px;height:1px;background:#e1dfdd;"></div>
<svg style="left:307px;top:313px;" width="16" height="16" viewBox="0 0 16 16"><rect x="0.6" y="0.6" width="12.2" height="12" fill="#fff" stroke="#5a5a5a" stroke-width="1.1"/><rect x="4.2" y="3.6" width="5" height="4" fill="#ecc67d"/><path d="M1.2 9.6h11M4.6 9.6v3M8.8 9.6v3" stroke="#8a8a8a" stroke-width="0.8"/><path d="M1.2 3.6h1.5M1.2 6.6h1.5M10.8 3.6h1.5M10.8 6.6h1.5M4.6 1.2v1.2M8.8 1.2v1.2" stroke="#aaa" stroke-width="0.7"/></svg>
<span class="t" style="left:330.67px;top:315.00px;font-size:12.4px;color:#262626;transform:scaleX(0.9419);transform-origin:left top;"><u>N</u>ew Rule...</span>
<svg style="left:307px;top:341px;" width="17" height="17" viewBox="0 0 17 17"><rect x="0.6" y="0.6" width="12.2" height="12" fill="#fff" stroke="#5a5a5a" stroke-width="1.1"/><rect x="4.2" y="3.6" width="5" height="4" fill="#ecc67d"/><path d="M1.2 9.6h11M4.6 9.6v3M8.8 9.6v3" stroke="#8a8a8a" stroke-width="0.8"/><path d="M1.2 3.6h1.5M1.2 6.6h1.5M10.8 3.6h1.5M10.8 6.6h1.5M4.6 1.2v1.2M8.8 1.2v1.2" stroke="#aaa" stroke-width="0.7"/><path d="M4.6 11.6l6.8-6.4 3.4 3.2-6.6 6.4-2.4 0.2z" fill="#fff"/><path d="M7.4 10.2l4.2-4 2.6 2.6-4.2 4z" fill="#e8738e" stroke="#e8738e" stroke-width="1" stroke-linejoin="round"/><path d="M6.4 11.4l2.2 2.2-2.4 1-1-1z" fill="#e8738e"/></svg>
<span class="t" style="left:331.05px;top:343.00px;font-size:12.4px;color:#262626;transform:scaleX(0.8912);transform-origin:left top;"><u>C</u>lear Rules</span>
<svg style="left:467.4px;top:341.5px;" width="8" height="12" viewBox="0 0 8 12"><path d="M1.3 1.4l4.7 4.4-4.7 4.4" fill="none" stroke="#404040" stroke-width="1.2"/></svg>
<svg style="left:305px;top:367px;" width="18" height="18" viewBox="0 0 18 18"><path d="M1.2 13V1.4H13.5" fill="none" stroke="#5a5a5a" stroke-width="1.1"/><rect x="3.6" y="3.6" width="12.2" height="12" fill="#fff" stroke="#5a5a5a" stroke-width="1.1"/><rect x="7.2" y="6.6" width="5" height="4" fill="#ecc67d"/><path d="M4.2 12.6h11M7.6 12.6v3M11.8 12.6v3" stroke="#8a8a8a" stroke-width="0.8"/><path d="M4.2 6.6h1.5M4.2 9.6h1.5M13.8 6.6h1.5M13.8 9.6h1.5M7.6 4.2v1.2M11.8 4.2v1.2" stroke="#aaa" stroke-width="0.7"/></svg>
<span class="t" style="left:330.67px;top:371.00px;font-size:12.4px;color:#262626;transform:scaleX(0.9328);transform-origin:left top;">Manage <u>R</u>ules...</span>
<div style="left:483.5px;top:207px;width:180px;height:47px;background:#d1cfcd;"></div>
<svg style="left:500px;top:73px;" width="32" height="31" viewBox="0 0 32 31"><rect x="0.5" y="0.5" width="27" height="23.6" fill="#fff" stroke="#808080" stroke-width="1.1"/><path d="M7.3 1V23.6M20.8 1V23.6M1 6.1H27M1 12.3H27M1 18.4H27" stroke="#a6a6a6" stroke-width="1" fill="none"/><rect x="8.0" y="6.8" width="12.1" height="4.800000000000001" fill="#ecc67d"/><rect x="13.5" y="15.5" width="17" height="14.2" fill="#fff"/><rect x="14.5" y="16.5" width="15" height="12.2" fill="#fff" stroke="#777" stroke-width="1"/><path d="M19.8 19.8l4.8 2.9-4.8 2.9" fill="none" stroke="#333" stroke-width="1.2"/></svg>
<span class="t" style="left:536.82px;top:83.00px;font-size:12.6px;color:#262626;font-weight:bold;transform:scaleX(0.9444);transform-origin:left top;"><u>G</u>reater Than...</span>
<svg style="left:500px;top:121px;" width="32" height="31" viewBox="0 0 32 31"><rect x="0.5" y="0.5" width="27" height="23.6" fill="#fff" stroke="#808080" stroke-width="1.1"/><path d="M7.3 1V23.6M20.8 1V23.6M1 6.1H27M1 12.3H27M1 18.4H27" stroke="#a6a6a6" stroke-width="1" fill="none"/><rect x="8.0" y="6.8" width="12.1" height="4.800000000000001" fill="#ecc67d"/><rect x="13.5" y="15.5" width="17" height="14.2" fill="#fff"/><rect x="14.5" y="16.5" width="15" height="12.2" fill="#fff" stroke="#777" stroke-width="1"/><path d="M24.6 19.8l-4.8 2.9 4.8 2.9" fill="none" stroke="#333" stroke-width="1.2"/></svg>
<span class="t" style="left:536.59px;top:131.00px;font-size:12.6px;color:#262626;font-weight:bold;transform:scaleX(0.8703);transform-origin:left top;"><u>L</u>ess Than...</span>
<svg style="left:500px;top:169px;" width="28" height="25" viewBox="0 0 28 25"><rect x="0.5" y="0.5" width="27" height="23.6" fill="#fff" stroke="#808080" stroke-width="1.1"/><path d="M7.3 1V23.6M20.8 1V23.6M1 6.1H27M1 12.3H27M1 18.4H27" stroke="#a6a6a6" stroke-width="1" fill="none"/><rect x="0.9" y="6.1" width="6.4" height="6.2" fill="#4a7ab8"/><rect x="20.8" y="6.1" width="6.3" height="6.2" fill="#4a7ab8"/><rect x="7.8" y="12.8" width="12.5" height="5.1" fill="#ecc67d"/></svg>
<span class="t" style="left:536.49px;top:179.00px;font-size:12.6px;color:#262626;font-weight:bold;transform:scaleX(0.9873);transform-origin:left top;"><u>B</u>etween...</span>
<svg style="left:500px;top:217px;" width="32" height="31" viewBox="0 0 32 31"><rect x="0.5" y="0.5" width="27" height="23.6" fill="#fff" stroke="#808080" stroke-width="1.1"/><path d="M7.3 1V23.6M20.8 1V23.6M1 6.1H27M1 12.3H27M1 18.4H27" stroke="#a6a6a6" stroke-width="1" fill="none"/><rect x="8.0" y="6.8" width="12.1" height="4.800000000000001" fill="#ecc67d"/><rect x="13.5" y="14.5" width="17" height="14.2" fill="#fff"/><rect x="14.5" y="15.5" width="15" height="12.2" fill="#fff" stroke="#777" stroke-width="1"/><path d="M17.8 20.4h8.4M17.8 23.5h8.4" fill="none" stroke="#333" stroke-width="1.2"/></svg>
<span class="t" style="left:536.57px;top:227.00px;font-size:12.6px;color:#262626;font-weight:bold;transform:scaleX(0.8951);transform-origin:left top;"><u>E</u>qual To...</span>
<svg style="left:500px;top:265px;" width="32" height="31" viewBox="0 0 32 31"><rect x="0.5" y="0.5" width="27" height="23.6" fill="#fff" stroke="#808080" stroke-width="1.1"/><path d="M7.3 1V23.6M20.8 1V23.6M1 6.1H27M1 12.3H27M1 18.4H27" stroke="#a6a6a6" stroke-width="1" fill="none"/><rect x="8.0" y="6.8" width="12.1" height="4.800000000000001" fill="#ecc67d"/><rect x="13.5" y="15.5" width="17" height="14.2" fill="#fff"/><rect x="14.5" y="16.5" width="15" height="12.2" fill="#fff" stroke="#777" stroke-width="1"/><text x="22.2" y="27" font-size="12" text-anchor="middle" font-family="Liberation Serif" fill="#3a3a3a">ab</text></svg>
<span class="t" style="left:537.18px;top:275.00px;font-size:12.6px;color:#262626;font-weight:bold;transform:scaleX(0.9342);transform-origin:left top;"><u>T</u>ext that Contains...</span>
<svg style="left:500px;top:313px;" width="32" height="31" viewBox="0 0 32 31"><rect x="0.5" y="0.5" width="26" height="25" fill="#fff" stroke="#808080" stroke-width="1.1"/><path d="M6.6 1V25M20.6 1V25M1 5.9H26M1 11H26M1 16H26M1 21H26" stroke="#a6a6a6" stroke-width="1" fill="none"/><rect x="6.199999999999999" y="9.9" width="15.200000000000001" height="6.2" fill="#ecc67d"/><rect x="12.9" y="13.2" width="17.7" height="16.2" fill="#fff"/><rect x="13.9" y="14.3" width="15.6" height="13.9" fill="#fff" stroke="#6a6a6a" stroke-width="1"/><rect x="13.4" y="13.8" width="16.6" height="3" fill="#6a6a6a"/><path d="M17.8 16.8v11.2M21.7 16.8v11.2M25.6 16.8v11.2M14 20.5h15.5M14 24.3h15.5" stroke="#9a9a9a" stroke-width="0.8"/><rect x="23" y="18.7" width="3.7" height="3.9" fill="#fff" stroke="#e36c0a" stroke-width="1.15"/></svg>
<span class="t" style="left:537.01px;top:323.00px;font-size:12.6px;color:#262626;font-weight:bold;transform:scaleX(0.9305);transform-origin:left top;"><u>A</u> Date Occurring...</span>
<svg style="left:500px;top:361px;" width="28" height="26" viewBox="0 0 28 26"><rect x="0.5" y="0.5" width="27" height="23.8" fill="#fff" stroke="#808080" stroke-width="1.1"/><path d="M7.3 1V23.8M20.8 1V23.8M1 6.1H27M1 12.3H27M1 18.4H27" stroke="#a6a6a6" stroke-width="1" fill="none"/><rect x="7.8" y="6.6" width="12.5" height="5.2" fill="#ecc67d"/><rect x="7.8" y="18.9" width="12.5" height="4.8" fill="#ecc67d"/><path d="M10.6 3.5h6.4" stroke="#9fb0c6" stroke-width="0.9"/><path d="M10.6 9.6h6.4" stroke="#9fb0c6" stroke-width="0.9"/><path d="M10.6 15.7h6.4" stroke="#9fb0c6" stroke-width="0.9"/><path d="M10.6 21.8h6.4" stroke="#9fb0c6" stroke-width="0.9"/></svg>
<span class="t" style="left:536.54px;top:371.00px;font-size:12.6px;color:#262626;font-weight:bold;transform:scaleX(0.9239);transform-origin:left top;"><u>D</u>uplicate Values...</span>
<div style="left:484px;top:399px;width:180px;height:1px;background:#e1dfdd;"></div>
<span class="t" style="left:520.06px;top:410.00px;font-size:12.4px;color:#262626;transform:scaleX(0.9446);transform-origin:left top;"><u>M</u>ore Rules...</span>
<div style="left:53px;top:7px;width:52px;height:28px;background:transparent;border:3px solid #fe0000;border-radius:2px;"></div>
<div style="left:104px;top:33px;width:172px;height:3px;background:#fe0000;"></div>
<svg style="left:272px;top:27px;" width="18" height="14" viewBox="0 0 18 14"><path d="M1.5 3L16.6 7.4 1.5 11.9z" fill="#fe0000"/></svg>
<div style="left:293px;top:67px;width:188.5px;height:36px;background:transparent;border:3px solid #fe0000;border-radius:2px;"></div>
<div style="left:456px;top:35.5px;width:12px;height:3px;background:#fe0000;"></div>
<div style="left:465.4px;top:35.5px;width:3px;height:18px;background:#fe0000;"></div>
<svg style="left:461px;top:50px;" width="12" height="16" viewBox="0 0 12 16"><path d="M0.8 0.6h10L5.9 15.4z" fill="#fe0000"/></svg>
<svg style="left:478px;top:100px;" width="12" height="108" viewBox="0 0 12 108"><path d="M3.1 0L5.4 93" stroke="#fe0000" stroke-width="3" fill="none"/><path d="M0.9 91.5h8.9L5.4 105.4z" fill="#fe0000"/></svg>
<div style="left:481px;top:205px;width:183px;height:49.5px;background:transparent;border:3px solid #fe0000;border-radius:2px;"></div>
</div></body></html>
